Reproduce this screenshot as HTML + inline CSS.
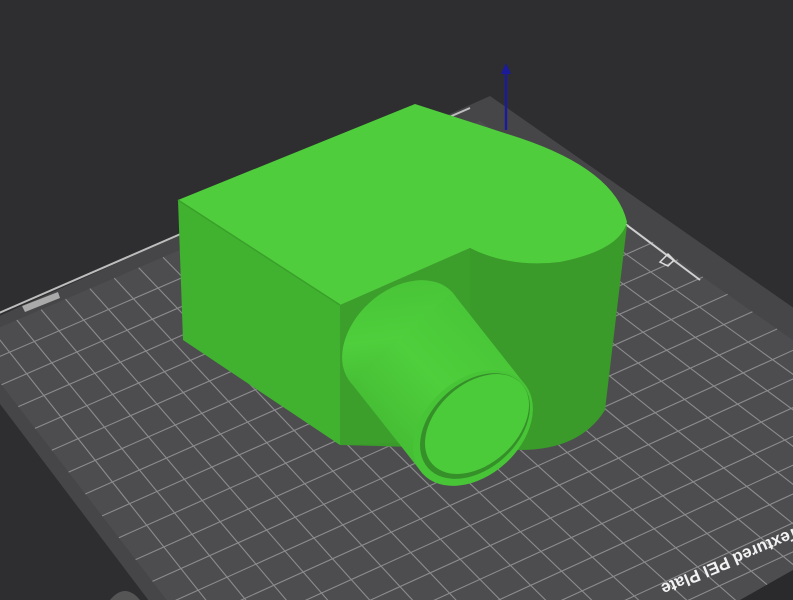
<!DOCTYPE html>
<html><head><meta charset="utf-8"><style>
html,body{margin:0;padding:0;background:#2e2e30;overflow:hidden;width:793px;height:600px}
svg{display:block;position:absolute;left:0;top:0}
</style></head><body>
<svg id="s" width="793" height="600" viewBox="0 0 793 600" xmlns="http://www.w3.org/2000/svg" overflow="hidden">
<defs>
<linearGradient id="tg" x1="0" y1="1" x2="1" y2="0">
<stop offset="0" stop-color="#3fb02f"/><stop offset="0.5" stop-color="#4fcf3c"/><stop offset="1" stop-color="#46c035"/>
</linearGradient>
</defs>
<rect width="793" height="600" fill="#2e2e30"/>
<polygon points="-50,338 490,96 1040,480 330,840" fill="#464648"/>
<polygon points="-32,341 480,121 1000,485 320,800" fill="#4d4d50"/>
<g id="grid" stroke="#8c8c8e" stroke-width="1.1" fill="none"></g>
<path d="M-40,330 L470,108" stroke="#bdbdbd" stroke-width="2"/>
<path d="M620,220 L700,280" stroke="#cfcfcf" stroke-width="2"/>
<path d="M22,306 L58,292 L60,298 L25,312Z" fill="#aaa"/>
<path d="M660,262 l8,-8 l6,6 l-6,6z" fill="none" stroke="#ddd" stroke-width="1.5"/>
<path d="M740,600 L793,570 L793,600Z" fill="#2a2a2c"/>
<path d="M110,600 q15,-18 30,0z" fill="#555"/>
<text x="0" y="0" transform="translate(728,556) rotate(157)" font-family="Liberation Sans, sans-serif" font-weight="bold" font-size="17" fill="#f2f2f2" text-anchor="middle">Textured PEI Plate</text>
<line x1="506" y1="130" x2="506" y2="72" stroke="#1a1a9a" stroke-width="2.5"/>
<polygon points="506,63 501,74 511,74" fill="#1a1a9a"/>
<polygon points="178,200 340,305 340,445 183,340" fill="#40b22f"/>
<path d="M340,305 L470,248 Q540,270 627,225 L605,410 Q580,450 520,450 L340,445Z" fill="#3a9a2a"/>
<path d="M470,248 L470,440 L340,445 L340,305Z" fill="#3c9f2c"/>
<path d="M178,200 L415,104 L520,138 Q615,170 627,222 Q620,250 560,262 Q510,268 470,248 L340,305Z" fill="#4fcd3c"/>
<path d="M178,200 L340,305" stroke="#3aa02b" stroke-width="1.5"/>
<ellipse cx="402" cy="338" rx="68" ry="48" transform="rotate(-42 402 338)" fill="url(#tg)"/>
<polygon points="452,292 352,384 423,474 523,382" fill="url(#tg)"/>
<ellipse cx="473" cy="428" rx="68" ry="48" transform="rotate(-42 473 428)" fill="#48c537"/>
<ellipse cx="475" cy="426" rx="63" ry="43" transform="rotate(-42 475 426)" fill="#35902a"/>
<ellipse cx="477" cy="424" rx="60" ry="40" transform="rotate(-42 477 424)" fill="#4ccb3a"/>
</svg>
<script>
var g=document.getElementById('grid');
var A=[-32,341],B=[480,121],C=[1000,485],D=[320,800];
function P(u,v){var x=(1-u)*(1-v)*A[0]+u*(1-v)*B[0]+u*v*C[0]+(1-u)*v*D[0];
var y=(1-u)*(1-v)*A[1]+u*(1-v)*B[1]+u*v*C[1]+(1-u)*v*D[1];return x.toFixed(1)+','+y.toFixed(1);}
var N=21,s='';
for(var i=1;i<N;i++){var t=i/N;
s+='M'+P(t,0)+' L'+P(t,1)+' ';
s+='M'+P(0,t)+' L'+P(1,t)+' ';}
var p=document.createElementNS('http://www.w3.org/2000/svg','path');p.setAttribute('d',s);g.appendChild(p);
</script>
</body></html>
